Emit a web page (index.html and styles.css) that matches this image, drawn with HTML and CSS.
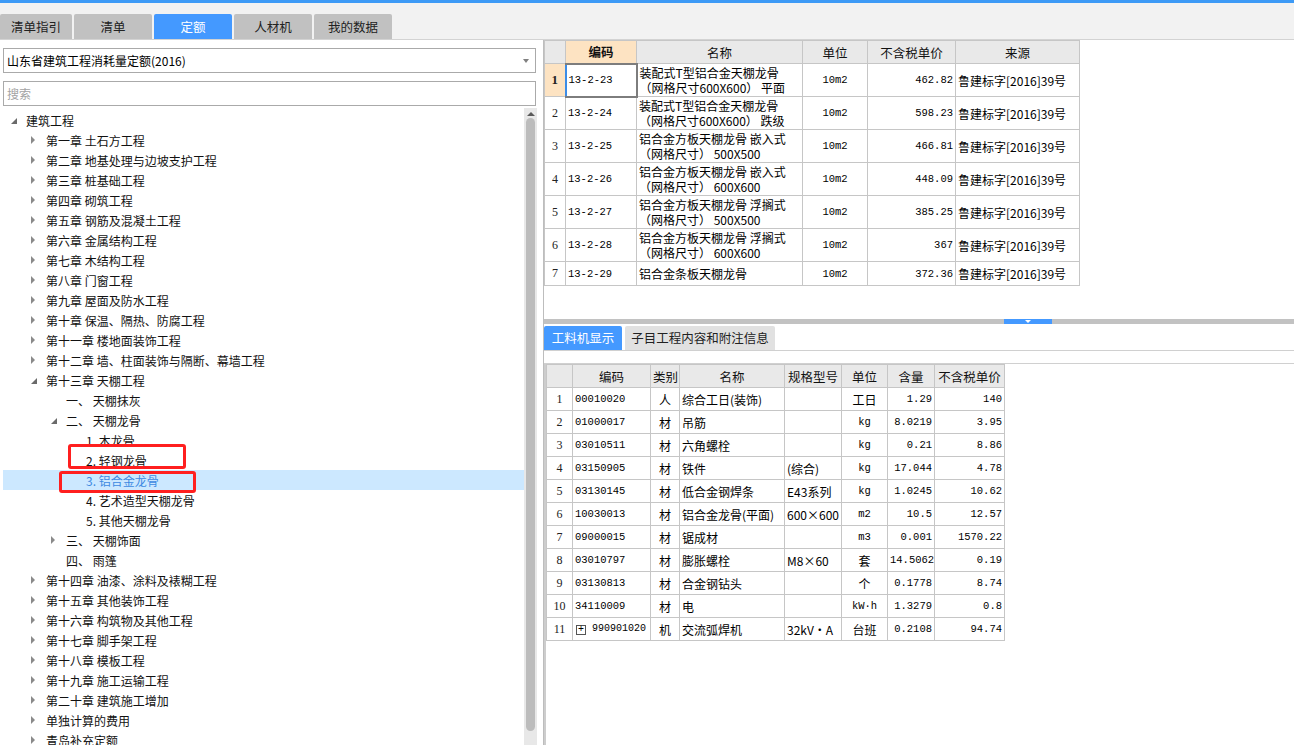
FILE: index.html
```html
<!DOCTYPE html>
<html lang="zh-CN">
<head>
<meta charset="utf-8">
<title>定额</title>
<link rel="stylesheet" href="styles.css">
</head>
<body>
<div class="topline"></div>
<div class="tabbar">
  <div class="tab first">清单指引</div>
  <div class="tab">清单</div>
  <div class="tab active">定额</div>
  <div class="tab">人材机</div>
  <div class="tab">我的数据</div>
</div>
<div class="main">
  <div class="left">
    <div class="select"><span>山东省建筑工程消耗量定额(2016)</span><span class="caret"></span></div>
    <div class="search">搜索</div>
    <div class="treewrap">
      <div class="tree">
        <div class="row l0"><span class="tw"><i class="exp"></i></span><span>建筑工程</span></div>
        <div class="row l1"><span class="tw"><i class="col"></i></span><span>第一章 土石方工程</span></div>
        <div class="row l1"><span class="tw"><i class="col"></i></span><span>第二章 地基处理与边坡支护工程</span></div>
        <div class="row l1"><span class="tw"><i class="col"></i></span><span>第三章 桩基础工程</span></div>
        <div class="row l1"><span class="tw"><i class="col"></i></span><span>第四章 砌筑工程</span></div>
        <div class="row l1"><span class="tw"><i class="col"></i></span><span>第五章 钢筋及混凝土工程</span></div>
        <div class="row l1"><span class="tw"><i class="col"></i></span><span>第六章 金属结构工程</span></div>
        <div class="row l1"><span class="tw"><i class="col"></i></span><span>第七章 木结构工程</span></div>
        <div class="row l1"><span class="tw"><i class="col"></i></span><span>第八章 门窗工程</span></div>
        <div class="row l1"><span class="tw"><i class="col"></i></span><span>第九章 屋面及防水工程</span></div>
        <div class="row l1"><span class="tw"><i class="col"></i></span><span>第十章 保温、隔热、防腐工程</span></div>
        <div class="row l1"><span class="tw"><i class="col"></i></span><span>第十一章 楼地面装饰工程</span></div>
        <div class="row l1"><span class="tw"><i class="col"></i></span><span>第十二章 墙、柱面装饰与隔断、幕墙工程</span></div>
        <div class="row l1"><span class="tw"><i class="exp"></i></span><span>第十三章 天棚工程</span></div>
        <div class="row l2"><span class="tw"></span><span>一、 天棚抹灰</span></div>
        <div class="row l2"><span class="tw"><i class="exp"></i></span><span>二、 天棚龙骨</span></div>
        <div class="row l3"><span class="tw"></span><span>1. 木龙骨</span></div>
        <div class="row l3"><span class="tw"></span><span>2. 轻钢龙骨</span></div>
        <div class="row l3 selected"><span class="tw"></span><span>3. 铝合金龙骨</span></div>
        <div class="row l3"><span class="tw"></span><span>4. 艺术造型天棚龙骨</span></div>
        <div class="row l3"><span class="tw"></span><span>5. 其他天棚龙骨</span></div>
        <div class="row l2"><span class="tw"><i class="col"></i></span><span>三、 天棚饰面</span></div>
        <div class="row l2"><span class="tw"></span><span>四、 雨篷</span></div>
        <div class="row l1"><span class="tw"><i class="col"></i></span><span>第十四章 油漆、涂料及裱糊工程</span></div>
        <div class="row l1"><span class="tw"><i class="col"></i></span><span>第十五章 其他装饰工程</span></div>
        <div class="row l1"><span class="tw"><i class="col"></i></span><span>第十六章 构筑物及其他工程</span></div>
        <div class="row l1"><span class="tw"><i class="col"></i></span><span>第十七章 脚手架工程</span></div>
        <div class="row l1"><span class="tw"><i class="col"></i></span><span>第十八章 模板工程</span></div>
        <div class="row l1"><span class="tw"><i class="col"></i></span><span>第十九章 施工运输工程</span></div>
        <div class="row l1"><span class="tw"><i class="col"></i></span><span>第二十章 建筑施工增加</span></div>
        <div class="row l1"><span class="tw"><i class="col"></i></span><span>单独计算的费用</span></div>
        <div class="row l1"><span class="tw"><i class="col"></i></span><span>青岛补充定额</span></div>
      </div>
      <div class="vscroll"><div class="up"></div><div class="thumb"></div></div>
      <div class="mark mark1"></div>
      <div class="mark mark2"></div>
    </div>
  </div>
  <div class="right">
    <div class="upper">
      <table class="grid g1">
        <colgroup><col style="width:21px"><col style="width:71px"><col style="width:166px"><col style="width:65px"><col style="width:88px"><col style="width:124px"></colgroup>
        <tr class="hd"><th></th><th class="hot">编码</th><th>名称</th><th>单位</th><th>不含税单价</th><th>来源</th></tr>
        <tr class="r2"><td class="n hot">1</td><td class="m sel">13-2-23</td><td class="nm">装配式T型铝合金天棚龙骨<br>（网格尺寸600X600） 平面</td><td class="c m">10m2</td><td class="r m">462.82</td><td>鲁建标字[2016]39号</td></tr>
        <tr class="r2"><td class="n">2</td><td class="m">13-2-24</td><td class="nm">装配式T型铝合金天棚龙骨<br>（网格尺寸600X600） 跌级</td><td class="c m">10m2</td><td class="r m">598.23</td><td>鲁建标字[2016]39号</td></tr>
        <tr class="r2"><td class="n">3</td><td class="m">13-2-25</td><td class="nm">铝合金方板天棚龙骨 嵌入式<br>（网格尺寸） 500X500</td><td class="c m">10m2</td><td class="r m">466.81</td><td>鲁建标字[2016]39号</td></tr>
        <tr class="r2"><td class="n">4</td><td class="m">13-2-26</td><td class="nm">铝合金方板天棚龙骨 嵌入式<br>（网格尺寸） 600X600</td><td class="c m">10m2</td><td class="r m">448.09</td><td>鲁建标字[2016]39号</td></tr>
        <tr class="r2"><td class="n">5</td><td class="m">13-2-27</td><td class="nm">铝合金方板天棚龙骨 浮搁式<br>（网格尺寸） 500X500</td><td class="c m">10m2</td><td class="r m">385.25</td><td>鲁建标字[2016]39号</td></tr>
        <tr class="r2"><td class="n">6</td><td class="m">13-2-28</td><td class="nm">铝合金方板天棚龙骨 浮搁式<br>（网格尺寸） 600X600</td><td class="c m">10m2</td><td class="r m">367</td><td>鲁建标字[2016]39号</td></tr>
        <tr class="r1"><td class="n">7</td><td class="m">13-2-29</td><td class="nm">铝合金条板天棚龙骨</td><td class="c m">10m2</td><td class="r m">372.36</td><td>鲁建标字[2016]39号</td></tr>
      </table>
    </div>
    <div class="splitter"><div class="handle"><i></i></div></div>
    <div class="lower">
      <div class="subtabs">
        <div class="stab active">工料机显示</div>
        <div class="stab wide">子目工程内容和附注信息</div>
      </div>
      <div class="toolbar"></div>
      <div class="g2wrap">
        <table class="grid g2">
          <colgroup><col style="width:26px"><col style="width:78px"><col style="width:29px"><col style="width:105px"><col style="width:57px"><col style="width:46px"><col style="width:47px"><col style="width:70px"></colgroup>
          <tr class="hd"><th></th><th>编码</th><th>类别</th><th>名称</th><th>规格型号</th><th>单位</th><th>含量</th><th>不含税单价</th></tr>
          <tr><td class="n">1</td><td class="m">00010020</td><td class="c">人</td><td>综合工日(装饰)</td><td></td><td class="c">工日</td><td class="r m">1.29</td><td class="r m">140</td></tr>
          <tr><td class="n">2</td><td class="m">01000017</td><td class="c">材</td><td>吊筋</td><td></td><td class="c m">kg</td><td class="r m">8.0219</td><td class="r m">3.95</td></tr>
          <tr><td class="n">3</td><td class="m">03010511</td><td class="c">材</td><td>六角螺栓</td><td></td><td class="c m">kg</td><td class="r m">0.21</td><td class="r m">8.86</td></tr>
          <tr><td class="n">4</td><td class="m">03150905</td><td class="c">材</td><td>铁件</td><td>(综合)</td><td class="c m">kg</td><td class="r m">17.044</td><td class="r m">4.78</td></tr>
          <tr><td class="n">5</td><td class="m">03130145</td><td class="c">材</td><td>低合金钢焊条</td><td>E43系列</td><td class="c m">kg</td><td class="r m">1.0245</td><td class="r m">10.62</td></tr>
          <tr><td class="n">6</td><td class="m">10030013</td><td class="c">材</td><td>铝合金龙骨(平面)</td><td>600×600</td><td class="c m">m2</td><td class="r m">10.5</td><td class="r m">12.57</td></tr>
          <tr><td class="n">7</td><td class="m">09000015</td><td class="c">材</td><td>锯成材</td><td></td><td class="c m">m3</td><td class="r m">0.001</td><td class="r m">1570.22</td></tr>
          <tr><td class="n">8</td><td class="m">03010797</td><td class="c">材</td><td>膨胀螺栓</td><td>M8×60</td><td class="c">套</td><td class="r m">14.5062</td><td class="r m">0.19</td></tr>
          <tr><td class="n">9</td><td class="m">03130813</td><td class="c">材</td><td>合金钢钻头</td><td></td><td class="c">个</td><td class="r m">0.1778</td><td class="r m">8.74</td></tr>
          <tr><td class="n">10</td><td class="m">34110009</td><td class="c">材</td><td>电</td><td></td><td class="c m">kW·h</td><td class="r m">1.3279</td><td class="r m">0.8</td></tr>
          <tr><td class="n">11</td><td class="m tight"><span class="plus">+</span> 990901020</td><td class="c">机</td><td>交流弧焊机</td><td>32kV·A</td><td class="c">台班</td><td class="r m">0.2108</td><td class="r m">94.74</td></tr>
        </table>
      </div>
    </div>
  </div>
</div>
</body>
</html>
```
FILE: styles.css
```css
* { box-sizing: border-box; }
html, body { margin: 0; padding: 0; }
body {
  width: 1294px;
  height: 745px;
  overflow: hidden;
  background: #fff;
  color: #000;
  font-family: "Noto Sans CJK SC", "Noto Sans", sans-serif;
  font-size: 12px;
}

.topline { height: 3px; background: #3d9af6; }

.tabbar {
  height: 37px;
  background: #f2f2f2;
  border-bottom: 1px solid #d3d3d3;
  padding-top: 11px;
  display: flex;
  gap: 2px;
}
.tab {
  width: 78px;
  height: 25px;
  background: #c1c1c1;
  border-radius: 2px 2px 0 0;
  text-align: center;
  line-height: 25px;
  font-size: 12.5px;
  color: #222;
}
.tab.first { width: 72px; }
.tab.active { background: #4499ff; color: #fff; }

.main { display: flex; height: 705px; }

.left { width: 543px; display: flex; flex-direction: column; }
.select {
  margin: 8px 0 0 3px;
  width: 533px;
  height: 25px;
  border: 1px solid #aaaaaa;
  display: flex;
  align-items: center;
  justify-content: space-between;
  padding: 0 6px 0 3px;
}
.caret {
  width: 0; height: 0;
  border-top: 4px solid #808080;
  border-left: 3px solid transparent;
  border-right: 3px solid transparent;
}
.search {
  margin: 8px 0 0 3px;
  width: 533px;
  height: 25px;
  border: 1px solid #aaaaaa;
  color: #a3a3a3;
  padding-left: 3px;
  line-height: 23px;
}
.treewrap { margin-top: 2px; flex: 1; display: flex; position: relative; overflow: hidden; }
.tree { margin-left: 3px; width: 521px; padding-top: 2px; }
.row {
  height: 20px;
  display: flex;
  align-items: center;
  white-space: nowrap;
  color: #111;
}
.row.l0 { padding-left: 3px; }
.row.l1 { padding-left: 23px; }
.row.l2 { padding-left: 43px; }
.row.l3 { padding-left: 63px; }
.row.selected { background: #cce8ff; color: #3e8ae2; }
.tw { width: 20px; height: 20px; flex: none; display: flex; align-items: center; }
.col {
  display: block;
  margin-left: 5px;
  width: 0; height: 0;
  border-left: 4px solid #8a8a8a;
  border-top: 4px solid transparent;
  border-bottom: 4px solid transparent;
}
.exp {
  display: block;
  margin-left: 5px;
  margin-top: 2px;
  width: 0; height: 0;
  border-bottom: 6px solid #6a6a6a;
  border-left: 6px solid transparent;
}

.vscroll {
  width: 13px;
  background: #e8e8e8;
  display: flex;
  flex-direction: column;
  align-items: center;
}
.vscroll .up {
  margin-top: 4px;
  width: 0; height: 0;
  border-bottom: 4px solid #5a5a5a;
  border-left: 4px solid transparent;
  border-right: 4px solid transparent;
}
.vscroll .thumb {
  margin-top: 2px;
  width: 9px;
  height: 613px;
  border-radius: 5px;
  background: #bcbcbc;
}

.mark {
  position: absolute;
  border: 3px solid #ff1f1f;
  border-radius: 3px;
}
.mark1 { left: 68px; top: 336px; width: 118px; height: 25px; }
.mark2 { left: 59px; top: 363px; width: 137px; height: 22px; }

.right {
  flex: 1;
  border-left: 1px solid #bdbdbd;
  display: flex;
  flex-direction: column;
}
.upper { height: 279px; }

.grid { border-collapse: collapse; table-layout: fixed; }
.grid th, .grid td {
  border: 1px solid #c6c6c6;
  padding: 0 2px;
  overflow: hidden;
  white-space: nowrap;
  vertical-align: middle;
  text-align: left;
  color: #000;
}
.grid th {
  background: #e9e9e9;
  font-weight: normal;
  text-align: center;
  font-size: 12.5px;
  color: #111;
}
.grid .hot { background: #fde3c2; font-weight: bold; }
.grid td.n { text-align: center; padding: 0; font-family: "Liberation Serif", serif; font-size: 12px; color: #222; }
.grid td.n.hot { font-weight: bold; font-size: 13px; }
.grid td.c { text-align: center; }
.grid td.r { text-align: right; }
.grid td.m { font-family: "Liberation Mono", "Noto Sans CJK SC", monospace; font-size: 10.5px; color: #000; }
.grid td.tight { font-size: 10px; padding-left: 1px; padding-right: 0; }
.grid td.nm { line-height: 15px; }
.grid td.sel { border: 2px solid #7d7d7d; border-left: 2px solid #3c8ce6; }

.g1 { width: 535px; }
.g1 tr.hd { height: 23px; }
.g1 tr.r2 { height: 33px; }
.g1 tr.r1 { height: 24px; }

.splitter { height: 5px; background: #c2c2c2; display: flex; }
.handle {
  margin-left: 460px;
  width: 48px;
  height: 5px;
  background: #4499ff;
  display: flex;
  justify-content: center;
  align-items: center;
}
.handle i {
  display: block;
  width: 0; height: 0;
  border-top: 3px solid #fff;
  border-left: 3px solid transparent;
  border-right: 3px solid transparent;
}

.lower { flex: 1; display: flex; flex-direction: column; }
.subtabs {
  margin-top: 2px;
  height: 25px;
  display: flex;
  gap: 3px;
  border-bottom: 1px solid #d0d0d0;
}
.stab {
  width: 78px;
  height: 24px;
  background: #e1e1e1;
  color: #222;
  text-align: center;
  line-height: 24px;
  font-size: 12.5px;
  border-radius: 2px 2px 0 0;
}
.stab.wide { width: 150px; }
.stab.active { background: #4499ff; color: #fff; }
.toolbar { height: 13px; border-bottom: 1px solid #d0d0d0; }
.g2wrap { flex: 1; border-left: 2px solid #cdcdcd; }
.g2 { width: 458px; }
.g2 tr { height: 23px; }
.g2 tr.hd { height: 23px; }
.plus {
  display: inline-block;
  width: 10px;
  height: 10px;
  border: 1px solid #555;
  line-height: 8px;
  text-align: center;
  font-size: 10px;
  vertical-align: -1px;
  margin-left: 2px;
}
```
